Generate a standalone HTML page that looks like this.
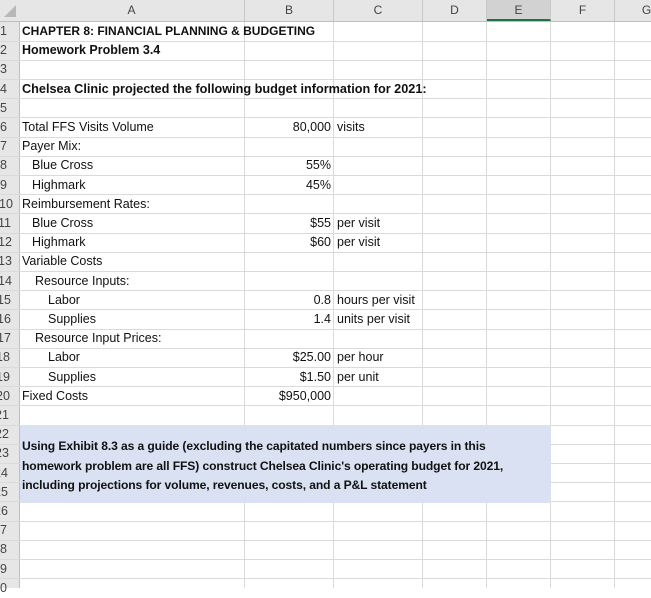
<!DOCTYPE html>
<html><head><style>
body{margin:0;width:651px;height:588px;overflow:hidden;background:#fff;font-family:"Liberation Sans",Arial,sans-serif;position:relative}
.hdr{position:absolute;top:0;left:0;width:651px;height:21px;background:#e6e6e6;border-bottom:1px solid #bfbfbf}
.ch{position:absolute;top:0;height:21px;line-height:21px;text-align:center;font-size:12px;color:#444;border-right:1px solid #c8c8c8;box-sizing:border-box}
.rh{position:absolute;left:0;top:22px;width:19px;height:566px;background:#e6e6e6;border-right:1px solid #bfbfbf}
.rn{position:absolute;left:0;width:19px;font-size:12.5px;color:#444;line-height:19px}
.hl{position:absolute;left:0;width:651px;height:1px;background:#dadada}
.vl{position:absolute;top:22px;width:1px;height:566px;background:#dadada}
.t{position:absolute;font-size:12.5px;line-height:19px;color:#111;white-space:nowrap}
.b{font-weight:bold}
.r{text-align:right}
.box{position:absolute;left:20px;top:425px;width:531px;height:78px;background:#d9e1f2}
.bt{position:absolute;left:22px;font-size:12.1px;font-weight:bold;letter-spacing:-0.1px;line-height:19px;color:#111;white-space:nowrap}
</style></head><body>
<div class="hdr"></div>
<svg style="position:absolute;left:3px;top:4px" width="14" height="14"><polygon points="13,1 13,13 1,13" fill="#b8b8b8"/></svg>
<div class="ch" style="left:19px;width:226px">A</div>
<div class="ch" style="left:245px;width:89px">B</div>
<div class="ch" style="left:334px;width:89px">C</div>
<div class="ch" style="left:423px;width:64px">D</div>
<div class="ch" style="left:487px;width:64px;background:#d2d2d2;border-bottom:2px solid #217346">E</div>
<div class="ch" style="left:551px;width:64px">F</div>
<div class="ch" style="left:615px;width:64px">G</div>
<div class="rh"></div>
<div class="vl" style="left:244px"></div>
<div class="vl" style="left:333px"></div>
<div class="vl" style="left:422px"></div>
<div class="vl" style="left:486px"></div>
<div class="vl" style="left:550px"></div>
<div class="vl" style="left:614px"></div>
<div class="hl" style="top:40.6px"></div><div class="hl" style="top:59.8px"></div><div class="hl" style="top:79px"></div><div class="hl" style="top:98.2px"></div><div class="hl" style="top:117.4px"></div><div class="hl" style="top:136.6px"></div><div class="hl" style="top:155.8px"></div><div class="hl" style="top:175px"></div><div class="hl" style="top:194.2px"></div><div class="hl" style="top:213.4px"></div><div class="hl" style="top:232.6px"></div><div class="hl" style="top:251.8px"></div><div class="hl" style="top:271px"></div><div class="hl" style="top:290.2px"></div><div class="hl" style="top:309.4px"></div><div class="hl" style="top:328.6px"></div><div class="hl" style="top:347.8px"></div><div class="hl" style="top:367px"></div><div class="hl" style="top:386.2px"></div><div class="hl" style="top:405.4px"></div><div class="hl" style="top:424.6px"></div><div class="hl" style="top:443.8px"></div><div class="hl" style="top:463px"></div><div class="hl" style="top:482.2px"></div><div class="hl" style="top:501.4px"></div><div class="hl" style="top:520.6px"></div><div class="hl" style="top:539.8px"></div><div class="hl" style="top:559px"></div><div class="hl" style="top:578.2px"></div>
<div class="box"></div>
<div class="rn" style="top:22px">1</div><div class="rn" style="top:41.2px">2</div><div class="rn" style="top:60.4px">3</div><div class="rn" style="top:79.6px">4</div><div class="rn" style="top:98.8px">5</div><div class="rn" style="top:118px">6</div><div class="rn" style="top:137.2px">7</div><div class="rn" style="top:156.4px">8</div><div class="rn" style="top:175.6px">9</div><div class="rn" style="top:194.8px;left:-1px">10</div><div class="rn" style="top:214px;left:-2px">11</div><div class="rn" style="top:233.2px;left:-2px">12</div><div class="rn" style="top:252.4px;left:-2px">13</div><div class="rn" style="top:271.6px;left:-2px">14</div><div class="rn" style="top:290.8px;left:-3px">15</div><div class="rn" style="top:310px;left:-3px">16</div><div class="rn" style="top:329.2px;left:-3px">17</div><div class="rn" style="top:348.4px;left:-4px">18</div><div class="rn" style="top:367.6px;left:-4px">19</div><div class="rn" style="top:386.8px;left:-4px">20</div><div class="rn" style="top:406px;left:-5px">21</div><div class="rn" style="top:425.2px;left:-5px">22</div><div class="rn" style="top:444.4px;left:-5px">23</div><div class="rn" style="top:463.6px;left:-6px">24</div><div class="rn" style="top:482.8px;left:-6px">25</div><div class="rn" style="top:502px;left:-6px">26</div><div class="rn" style="top:521.2px;left:-7px">27</div><div class="rn" style="top:540.4px;left:-7px">28</div><div class="rn" style="top:559.6px;left:-7px">29</div><div class="rn" style="top:578.8px;left:-7px">30</div>
<div class="t b" style="left:22px;top:22px;font-size:12px">CHAPTER 8: FINANCIAL PLANNING &amp; BUDGETING</div>
<div class="t b" style="left:22px;top:41.2px">Homework Problem 3.4</div>
<div class="t b" style="left:22px;top:79.6px;font-size:12.7px">Chelsea Clinic projected the following budget information for 2021:</div>
<div class="t" style="left:22px;top:118px">Total FFS Visits Volume</div>
<div class="t" style="left:22px;top:137.2px">Payer Mix:</div>
<div class="t" style="left:32px;top:156.4px">Blue Cross</div>
<div class="t" style="left:32px;top:175.6px">Highmark</div>
<div class="t" style="left:22px;top:194.8px">Reimbursement Rates:</div>
<div class="t" style="left:32px;top:214px">Blue Cross</div>
<div class="t" style="left:32px;top:233.2px">Highmark</div>
<div class="t" style="left:22px;top:252.4px">Variable Costs</div>
<div class="t" style="left:35px;top:271.6px">Resource Inputs:</div>
<div class="t" style="left:48px;top:290.8px">Labor</div>
<div class="t" style="left:48px;top:310px">Supplies</div>
<div class="t" style="left:35px;top:329.2px">Resource Input Prices:</div>
<div class="t" style="left:48px;top:348.4px">Labor</div>
<div class="t" style="left:48px;top:367.6px">Supplies</div>
<div class="t" style="left:22px;top:386.8px">Fixed Costs</div>
<div class="t r" style="right:320px;top:118px">80,000</div>
<div class="t r" style="right:320px;top:156.4px">55%</div>
<div class="t r" style="right:320px;top:175.6px">45%</div>
<div class="t r" style="right:320px;top:214px">$55</div>
<div class="t r" style="right:320px;top:233.2px">$60</div>
<div class="t r" style="right:320px;top:290.8px">0.8</div>
<div class="t r" style="right:320px;top:310px">1.4</div>
<div class="t r" style="right:320px;top:348.4px">$25.00</div>
<div class="t r" style="right:320px;top:367.6px">$1.50</div>
<div class="t r" style="right:320px;top:386.8px">$950,000</div>
<div class="t" style="left:337px;top:118px">visits</div>
<div class="t" style="left:337px;top:214px">per visit</div>
<div class="t" style="left:337px;top:233.2px">per visit</div>
<div class="t" style="left:337px;top:290.8px">hours per visit</div>
<div class="t" style="left:337px;top:310px">units per visit</div>
<div class="t" style="left:337px;top:348.4px">per hour</div>
<div class="t" style="left:337px;top:367.6px">per unit</div>
<div class="bt" style="top:437px">Using Exhibit 8.3 as a guide (excluding the capitated numbers since payers in this</div>
<div class="bt" style="top:456.5px">homework problem are all FFS) construct Chelsea Clinic's operating budget for 2021,</div>
<div class="bt" style="top:476px">including projections for volume, revenues, costs, and a P&amp;L statement</div>
</body></html>
